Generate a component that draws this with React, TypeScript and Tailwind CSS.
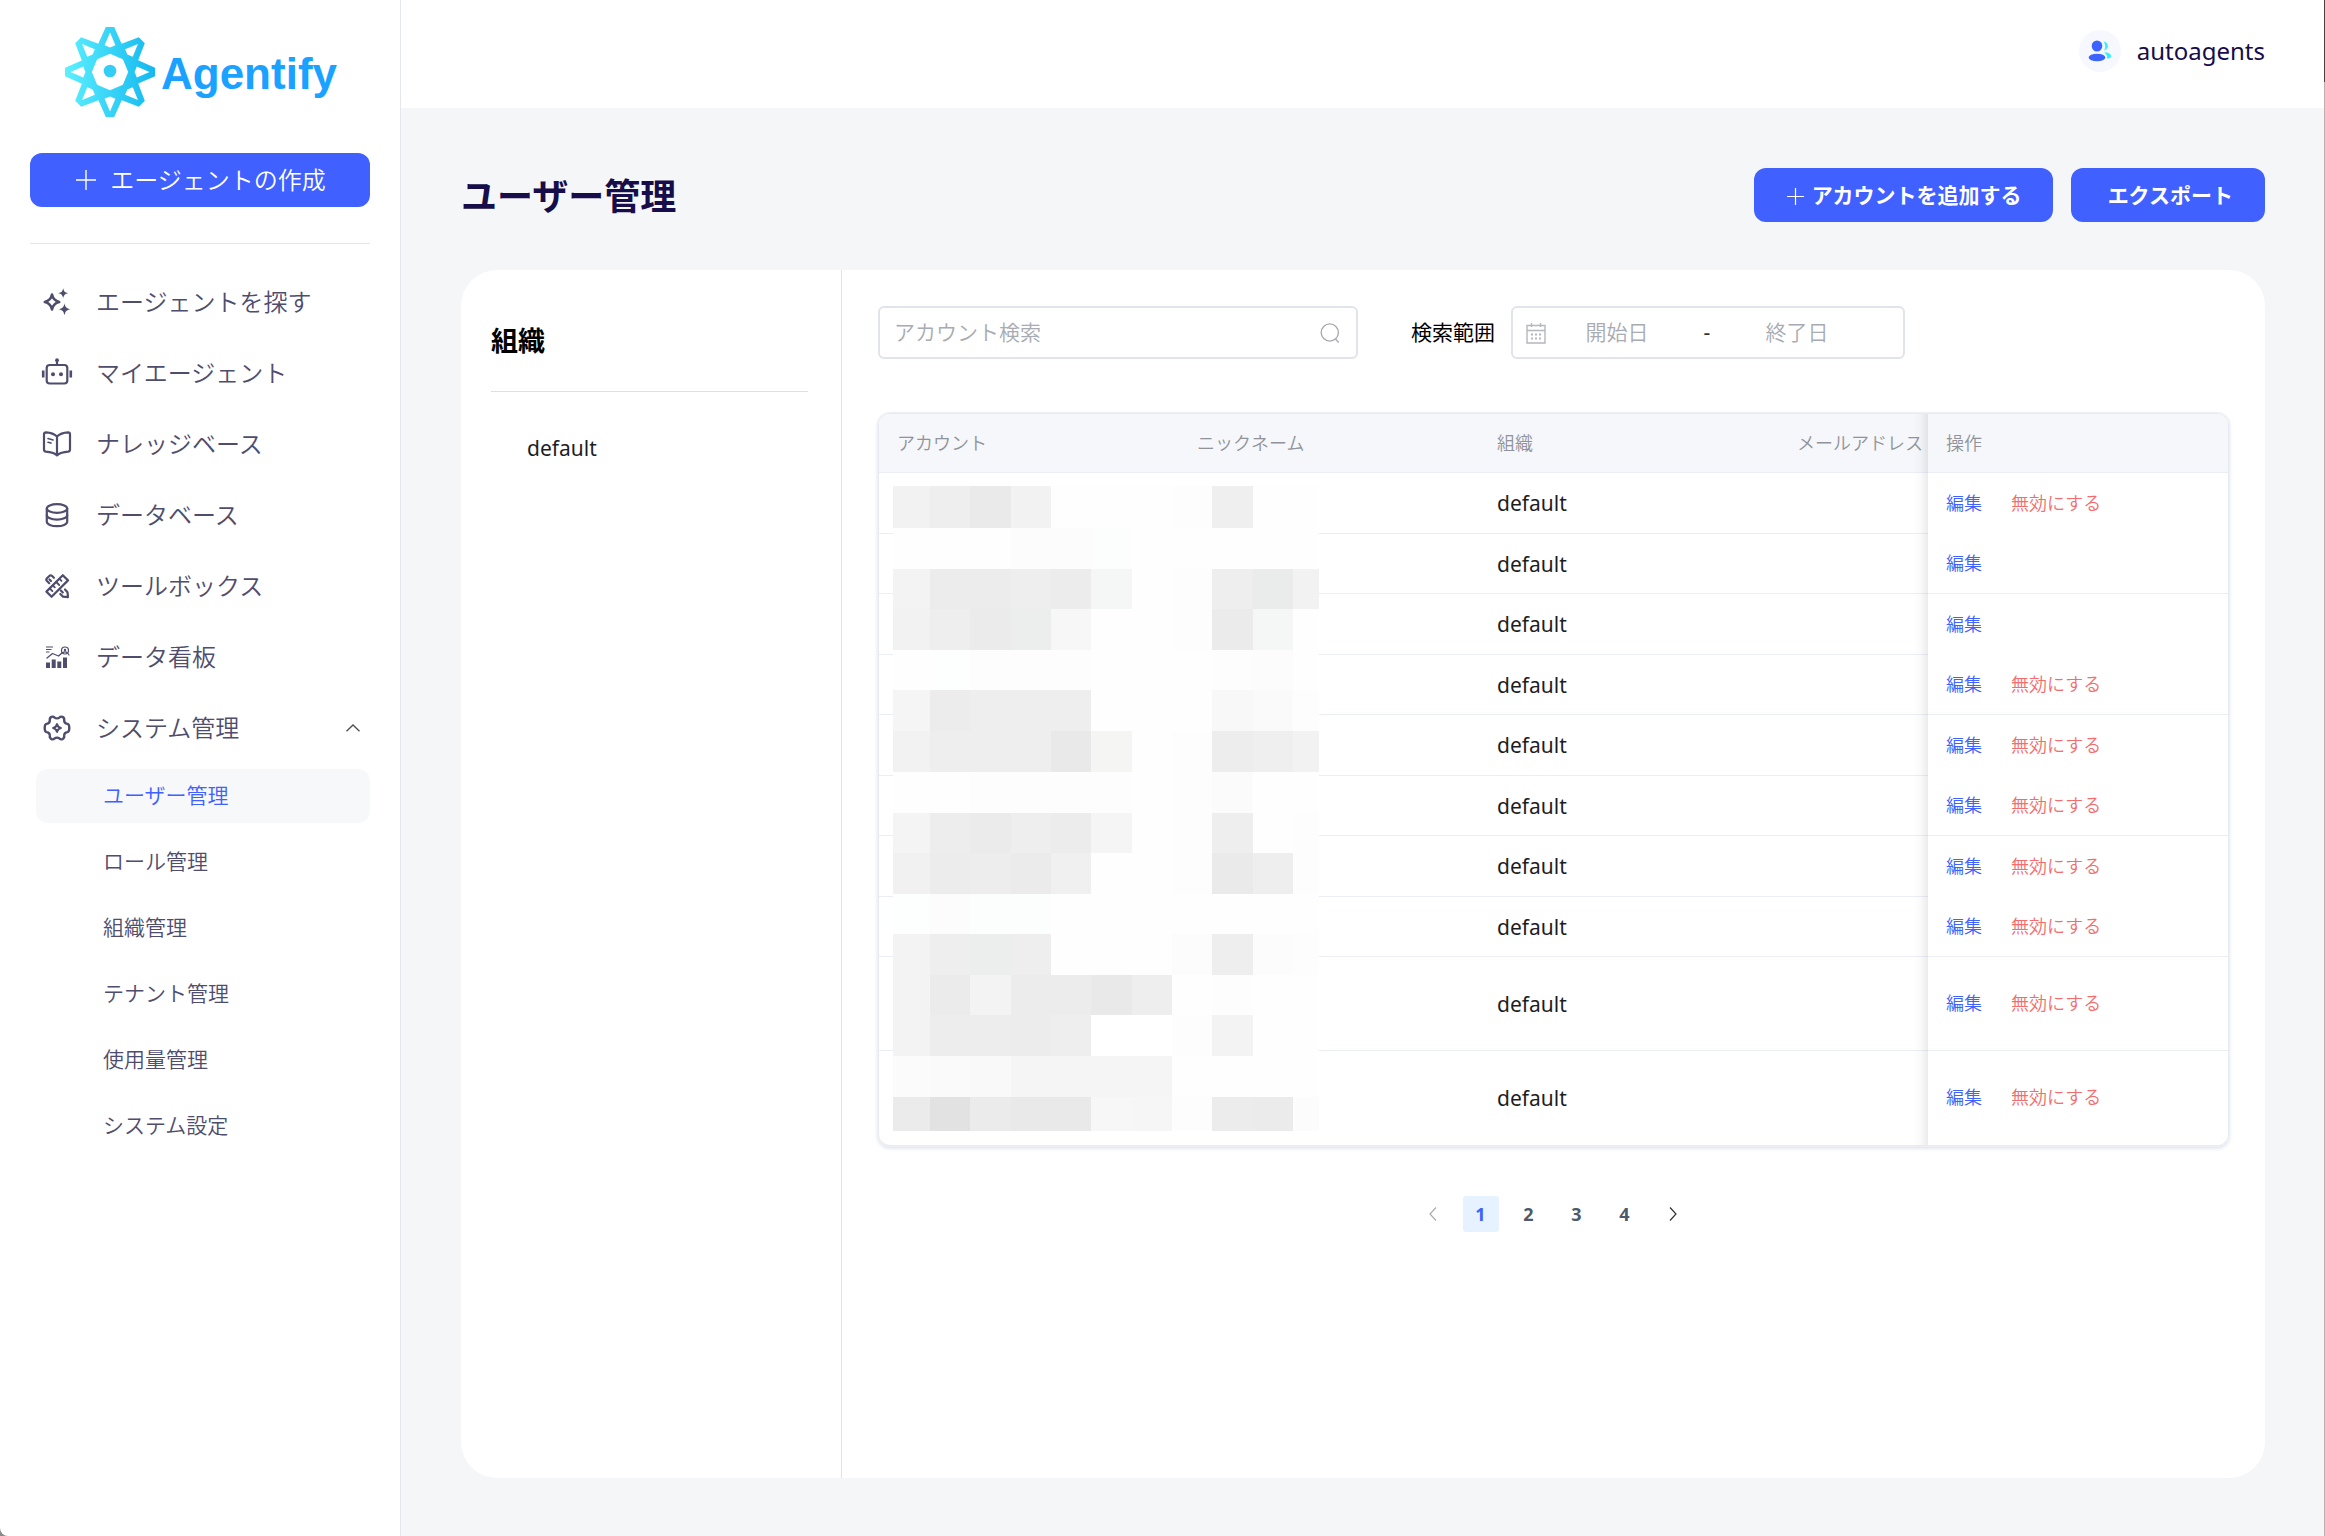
import React from "react";

const navItems = [
  { label: "エージェントを探す", icon: SparkleIcon },
  { label: "マイエージェント", icon: RobotIcon },
  { label: "ナレッジベース", icon: BookIcon },
  { label: "データベース", icon: DatabaseIcon },
  { label: "ツールボックス", icon: ToolsIcon },
  { label: "データ看板", icon: ChartIcon },
];

const subItems = ["ユーザー管理", "ロール管理", "組織管理", "テナント管理", "使用量管理", "システム設定"];

const rows = [
  { org: "default", canDisable: true },
  { org: "default", canDisable: false },
  { org: "default", canDisable: false },
  { org: "default", canDisable: true },
  { org: "default", canDisable: true },
  { org: "default", canDisable: true },
  { org: "default", canDisable: true },
  { org: "default", canDisable: true },
  { org: "default", canDisable: true, tall: true },
  { org: "default", canDisable: true, tall: true },
];

/* Masked account and nickname cells: column edges, row edges and one shade per tile. */
const maskX = [0, 37, 77, 118, 158, 198, 239, 279, 319, 360, 400, 426];
const maskY = [0, 42, 83, 123, 164, 204, 245, 286, 327, 367, 408, 448, 489, 529, 570, 611, 645];
const maskTiles = [
  "f2f2f2 eeeeee eaeaea f2f2f2 fefefe fefefe fefefe fdfdfd efefef fefefe fefefe",
  "fefefe fefefe fefefe fcfcfc fcfcfc fcfefd fefefe fefefe fefefe fefefe fefefe",
  "f3f3f3 ececec ececec eeeeee ececec f5f7f6 fefefe fdfdfd eeeeee eaeceb f2f2f2",
  "f2f2f2 eeeeee ebebeb ebeeed f7f7f7 fefefe fefefe fdfdfd ebebeb f5f7f6 fefefe",
  "fefefe fdfefe fdfdfd fdfdfd fdfdfd fefefe fefefe fefefe fdfdfd fcfcfc fefefe",
  "f5f5f5 ececec eeeeee eeeeee eeeeee fefefe fefefe fefefe f8f8f8 fafafa fdfdfd",
  "f2f2f2 eeeeee eeeeee eeeeee e9e9e9 f5f5f3 fefefe fdfdfd ededed efefef f2f2f2",
  "fefefe fefefe fdfdfd fdfdfd fdfdfd fdfdfd fefefe fdfdfd fbfbfb fefefe fefefe",
  "f4f4f4 ededed ebebeb eeeeee ececec f5f5f5 fefefe fdfdfd eeeeee fefefe fdfdfd",
  "f1f1f1 ececec ededed ebebeb f0f0f0 fefefe fefefe fdfdfd eaeaea eeeeee fdfdfd",
  "fdfefe fcfcfc fcfefd fcfefd fefefe fefefe fefefe fefefe fefefe fefefe fefefe",
  "f3f3f3 eeeeee ebeeed eeeeee fefefe fefefe fefefe fcfcfc eeeeee fcfcfc fdfdfd",
  "f3f3f3 ebebeb f3f3f3 ececec ececec e9e9e9 eeeeee fefefe fdfdfd fefefe fefefe",
  "f3f3f3 ededed ededed ececec eeeeee ffffff ffffff fdfdfd f3f3f3 fefefe fefefe",
  "fbfbfb fafafa f9f9f9 f5f5f5 f5f5f5 f5f5f5 f5f5f5 fefefe fefefe fefefe fefefe",
  "ebebeb e2e2e2 ebebeb e9e9e9 e9e9e9 f7f7f7 f6f6f6 fdfdfd ececec ebebeb fcfcfc",
].map((line) => line.split(" "));

function Mosaic() {
  return (
    <svg className="absolute left-[14px] top-[72px]" width="426" height="645" viewBox="0 0 426 645" shapeRendering="crispEdges" aria-hidden="true">
      {maskTiles.map((line, r) =>
        line.map((shade, c) => (
          <rect
            key={`${r}-${c}`}
            x={maskX[c]}
            y={maskY[r]}
            width={maskX[c + 1] - maskX[c]}
            height={maskY[r + 1] - maskY[r]}
            fill={`#${shade}`}
          />
        )),
      )}
    </svg>
  );
}

function Icon({ children }: { children: React.ReactNode }) {
  return (
    <svg
      width="32"
      height="32"
      viewBox="0 0 32 32"
      fill="none"
      stroke="#4f4d6e"
      strokeWidth="2.2"
      strokeLinecap="round"
      strokeLinejoin="round"
      className="shrink-0"
      aria-hidden="true"
    >
      {children}
    </svg>
  );
}

function SparkleIcon() {
  return (
    <Icon>
      <path d="M11 8.600c.9 4.400 2.900 6.400 7.200 7.400c-4.300 1-6.300 3-7.200 7.400c-.9-4.400-2.900-6.400-7.200-7.400c4.300-1 6.300-3 7.200-7.400z" strokeWidth="2.600" />
      <path d="M22.200 2.300c.7 3.200 1.700 4.200 4.900 4.900c-3.200.7-4.200 1.700-4.900 4.900c-.7-3.200-1.700-4.200-4.900-4.900c3.200-.7 4.200-1.700 4.900-4.900z" fill="#4f4d6e" stroke="none" />
      <path d="M23.500 17.300c.8 4.100 2 5.200 6 6c-4 .8-5.200 2-6 6c-.8-4-2-5.200-6-6c4-.8 5.200-1.900 6-6z" fill="#4f4d6e" stroke="none" />
    </Icon>
  );
}

function RobotIcon() {
  return (
    <Icon>
      <rect x="5.700" y="8" width="20.600" height="18.500" rx="3" />
      <path d="M16 7.500V4" />
      <circle cx="16" cy="3.200" r="1.900" fill="#4f4d6e" stroke="none" />
      <circle cx="12" cy="17.200" r="2" fill="#4f4d6e" stroke="none" />
      <circle cx="20" cy="17.200" r="2" fill="#4f4d6e" stroke="none" />
      <path d="M2.200 13.500v7M29.800 13.500v7" strokeWidth="2.600" strokeLinecap="butt" />
    </Icon>
  );
}

function BookIcon() {
  return (
    <Icon>
      <path d="M16 8.500C13.500 6 9 4.500 5 4.300C3.700 4.300 3 5 3 6.300V21.500c0 1.300.7 2 2 2.200c4 .3 8 1.300 11 3.600c3-2.300 7-3.300 11-3.600c1.300-.2 2-.9 2-2.200V6.300c0-1.300-.7-2-2-2C23 4.500 18.500 6 16 8.500zM16 8.500V27" />
      <path d="M7 10.500l5 1.500M7 14.200l3 .9" strokeWidth="1.600" />
    </Icon>
  );
}

function DatabaseIcon() {
  return (
    <Icon>
      <ellipse cx="16" cy="9.500" rx="10.200" ry="4.400" />
      <path d="M5.800 9.500v13.300c0 2.400 4.600 4.400 10.200 4.400s10.200-2 10.200-4.400V9.500" />
      <path d="M5.800 16.200c0 2.400 4.600 4.400 10.200 4.400s10.200-2 10.200-4.400" />
    </Icon>
  );
}

function ToolsIcon() {
  return (
    <Icon>
      <path d="M21.800 5.200l5.200 5.200L10.600 26.800L5.400 21.600z" />
      <path d="M18.500 8.800l2 2M15.200 12l3 3M11.800 15.400l2 2M8.800 18.500l2.600 2.600" strokeWidth="1.800" />
      <path d="M8.200 13.200L6 11a2 2 0 0 1 0-2.800L8.300 6a2 2 0 0 1 2.800 0l1.800 1.800M8.500 9.500l1.500 1.500" />
      <path d="M24 19.500l2.500 2.700l.5 5l-5-.6l-2.700-2.600M19.800 20.500l2 2" />
    </Icon>
  );
}

function ChartIcon() {
  return (
    <Icon>
      <path d="M5 21.500h4V27H5zM10.700 18.500h4V27h-4zM16.300 20.500h4V27h-4zM22 16.500h4V27h-4z" fill="#4f4d6e" stroke="none" />
      <path d="M6 17l5.500-4.500l6 2.500l4-3.500" strokeWidth="1.300" />
      <path d="M5 6h7M5 8.500h5.500M5 11h3.500" strokeWidth="1" strokeLinecap="butt" />
      <circle cx="24" cy="9.500" r="3.500" strokeWidth="1.200" />
      <circle cx="24" cy="9" r="1.200" fill="#4f4d6e" stroke="none" />
      <path d="M22 11.700c.8-1 3.200-1 4 0M26.500 12l1.500 2" strokeWidth="1.200" />
    </Icon>
  );
}

function GearIcon() {
  return (
    <Icon>
      <path
        d="M10.500 4.900c1.600-.8 2.500 0 3.200.7c1.200 1 3.400 1 4.600 0c.7-.7 1.600-1.500 3.200-.7c1.500.8 1.900 1.700 1.700 3.200c-.1 1.900 1.200 3.600 3.200 3.800c1.200.2 1.900 1.300 1.900 4.100s-.7 3.900-1.900 4.100c-2 .2-3.300 1.900-3.200 3.800c.2 1.500-.2 2.400-1.700 3.200c-1.600.8-2.500 0-3.200-.7c-1.200-1-3.400-1-4.600 0c-.7.7-1.600 1.500-3.200.7c-1.500-.8-1.900-1.700-1.700-3.200c.1-1.900-1.200-3.600-3.200-3.800c-1.200-.2-1.900-1.300-1.900-4.100s.7-3.900 1.900-4.100c2-.2 3.300-1.900 3.200-3.800c-.2-1.500.2-2.400 1.700-3.200z"
        strokeWidth="2.400"
      />
      <path d="M16 12.200c.6 2.200 1.600 3.200 3.800 3.800c-2.200.6-3.200 1.600-3.800 3.800c-.6-2.200-1.600-3.200-3.800-3.800c2.200-.6 3.200-1.600 3.800-3.800z" />
    </Icon>
  );
}

/* A point of the logo, given in the frame of the upright spike and turned by `deg`. */
function turned(x: number, y: number, deg: number) {
  const t = (deg * Math.PI) / 180;
  return `${(45 + x * Math.cos(t) - y * Math.sin(t)).toFixed(2)} ${(45 + x * Math.sin(t) + y * Math.cos(t)).toFixed(2)}`;
}

const spikes = [0, 45, 90, 135, 180, 225, 270, 315];
const logoPath = [
  `M${spikes.map((a) => [turned(-4.2, -45, a), turned(4.2, -45, a), turned(11.6, -28.2, a)].join("L")).join("L")}Z`,
  ...spikes.map((a) => `M${[turned(0, -39.5, a), turned(5.4, -26.8, a), turned(0, -24.6, a), turned(-5.4, -26.8, a)].join("L")}Z`),
  `M${spikes.map((a) => turned(0, -18.2, a)).join("L")}Z`,
].join("");

function LogoMark() {
  return (
    <svg width="90" height="90" viewBox="0 0 90 90" fill="none" aria-hidden="true">
      <defs>
        <linearGradient id="logo" gradientUnits="userSpaceOnUse" x1="0" y1="45" x2="90" y2="45">
          <stop offset="0" stopColor="#5cf0ff" />
          <stop offset="1" stopColor="#14b8ef" />
        </linearGradient>
      </defs>
      <path d={logoPath} fill="url(#logo)" fillRule="evenodd" />
      <circle cx="45" cy="44" r="6.300" fill="#34cdf5" />
    </svg>
  );
}

function Plus({ size }: { size: number }) {
  return (
    <svg width={size} height={size} viewBox="0 0 20 20" stroke="white" strokeWidth="1.400" aria-hidden="true">
      <path d="M10 0v20M0 10h20" />
    </svg>
  );
}

function Sidebar() {
  return (
    <aside className="flex w-[401px] shrink-0 flex-col rounded-bl-lg border-r border-[#e6e7ea] bg-white pl-[30px] pr-[30px]">
      <div className="mt-[27px] flex h-[90px] items-center justify-center gap-[6px] pl-[2px]">
        <LogoMark />
        <span className="mt-1 font-['Liberation_Sans',Arial,sans-serif] text-[44px] leading-[50px] font-bold text-[#1ba1ff]">Agentify</span>
      </div>
      <button className="mt-9 flex h-[54px] w-full items-center justify-center gap-[14px] rounded-xl bg-[#4060ff] pl-[2px] text-[24px] text-white">
        <Plus size={20} />
        エージェントの作成
      </button>
      <hr className="mt-9 border-t border-[#e6e7ea]" />
      <nav className="mt-[22px] text-[#4f4d6e]">
        <ul>
          {navItems.map(({ label, icon: ItemIcon }) => (
            <li key={label}>
              <a href="#" className="flex h-[71px] items-center gap-[23px] pl-[11px] text-[24px]">
                <ItemIcon />
                {label}
              </a>
            </li>
          ))}
          <li>
            <button aria-expanded="true" className="flex h-[71px] w-full items-center gap-[23px] pl-[11px] pr-[10px] text-left text-[24px]">
              <GearIcon />
              <span className="flex-1">システム管理</span>
              <svg width="14" height="8" viewBox="0 0 14 8" fill="none" stroke="#4d4d4d" strokeWidth="1.300" aria-hidden="true">
                <path d="M.5 7.300L7 1l6.500 6.300" />
              </svg>
            </button>
            <ul className="mt-[6px] ml-[6px] flex flex-col gap-3 text-[21px]">
              {subItems.map((label, i) => (
                <li key={label}>
                  <a
                    href="#"
                    className={
                      i === 0
                        ? "flex h-[54px] items-center rounded-xl bg-[#f6f8fa] pl-[67px] text-[#4060ff]"
                        : "flex h-[54px] items-center rounded-xl pl-[67px]"
                    }
                  >
                    {label}
                  </a>
                </li>
              ))}
            </ul>
          </li>
        </ul>
      </nav>
    </aside>
  );
}

function Filters() {
  const box = "flex h-[53px] items-center rounded-md border-2 border-[#e2e4eb] bg-white";
  return (
    <form className="flex items-center text-[21px]" onSubmit={(e) => e.preventDefault()}>
      <div className={`${box} w-[480px] pl-[14px] pr-[16px]`}>
        <input
          type="text"
          aria-label="アカウント検索"
          placeholder="アカウント検索"
          className="min-w-0 flex-1 bg-transparent outline-none placeholder:text-[#a8abb2]"
        />
        <svg width="20" height="22" viewBox="0 0 20 22" fill="none" stroke="#a8abb2" strokeWidth="1.400" aria-hidden="true">
          <circle cx="9.800" cy="10.500" r="8.600" />
          <path d="M15.500 17l3.200 3.500" />
        </svg>
      </div>
      <span id="range-label" className="ml-[53px] font-normal text-black">
        検索範囲
      </span>
      <div role="group" aria-labelledby="range-label" className={`${box} ml-4 w-[394px] pl-[13px] pr-2`}>
        <svg width="20" height="22" viewBox="0 0 20 22" fill="none" stroke="#b4b7be" strokeWidth="1.400" aria-hidden="true">
          <path d="M1 3.500h18v17.500H1zM1 8.500h18M5.500 1v4M14.500 1v4" />
          <path d="M5 12.500h2M9 12.500h2M13 12.500h2M5 16.500h2M9 16.500h2M13 16.500h2" strokeWidth="1.800" />
        </svg>
        <input type="text" aria-label="開始日" placeholder="開始日" className="w-[142px] bg-transparent text-center outline-none placeholder:text-[#a8abb2]" />
        <span className="w-[38px] text-center font-normal text-[#303133]">-</span>
        <input type="text" aria-label="終了日" placeholder="終了日" className="w-[142px] bg-transparent text-center outline-none placeholder:text-[#a8abb2]" />
      </div>
    </form>
  );
}

function AccountTable() {
  const head = "bg-[#f5f7fb] border-b border-[#ebeef7] pl-[18px] text-left font-[350]";
  return (
    <div className="relative mt-[54px] overflow-hidden rounded-xl border border-[#e6eaf1] shadow-[0_0_0_1px_#eef0f5,0_2px_4px_#d5dbe5]">
      <table className="w-full table-fixed border-separate border-spacing-0">
        <colgroup>
          <col className="w-[300px]" />
          <col className="w-[300px]" />
          <col className="w-[300px]" />
          <col />
          <col className="w-[300px]" />
        </colgroup>
        <thead>
          <tr className="h-[59px] text-[18px] leading-6 text-[#909399]">
            <th scope="col" className={head}>アカウント</th>
            <th scope="col" className={head}>ニックネーム</th>
            <th scope="col" className={head}>組織</th>
            <th scope="col" className={`${head} whitespace-nowrap`}>メールアドレス</th>
            <th scope="col" className={head}>操作</th>
          </tr>
        </thead>
        <tbody>
          {rows.map((row, i) => {
            const last = i === rows.length - 1;
            const line = last ? "" : "border-b border-[#ebeef5]";
            const fixedLine = last || (i < 8 && i % 2 === 0) ? "" : "border-b border-[#ebeef5]";
            return (
              <tr key={i} className={row.tall ? "h-[94px]" : "odd:h-[61px] even:h-[60px]"}>
                <td className={line} />
                <td className={line} />
                <td className={`${line} pl-[18px] text-[21px] leading-7 font-normal text-[#1d1d1f]`}>{row.org}</td>
                <td className={line} />
                <td className={`${fixedLine} bg-white pb-[2px] pl-[18px] text-[18px] leading-6`}>
                  <div className="flex gap-[29px]">
                    <button className="text-[#4060ff]">編集</button>
                    {row.canDisable && <button className="text-[#f56c6c]">無効にする</button>}
                  </div>
                </td>
              </tr>
            );
          })}
        </tbody>
      </table>
      <div className="pointer-events-none absolute inset-y-0 right-[300px] w-[15px] bg-linear-to-r from-transparent via-black/2 to-black/8" />
      <Mosaic />
    </div>
  );
}

function Pagination() {
  const item = "flex h-9 w-9 items-center justify-center rounded-[3px] text-[18px] font-bold";
  return (
    <nav aria-label="ページ" className="mt-[50px] flex justify-center gap-3 pr-[2px]">
      <button aria-label="前のページ" className={item} disabled>
        <svg width="8" height="14" viewBox="0 0 8 14" fill="none" stroke="#a8abb2" strokeWidth="1.200">
          <path d="M7 .5L1 7l6 6.500" />
        </svg>
      </button>
      {[1, 2, 3, 4].map((n) => (
        <button key={n} aria-current={n === 1 ? "page" : undefined} className={n === 1 ? `${item} bg-[#e6f2ff] text-[#4060ff]` : `${item} text-[#4e5969]`}>
          {n}
        </button>
      ))}
      <button aria-label="次のページ" className={item}>
        <svg width="8" height="14" viewBox="0 0 8 14" fill="none" stroke="#303133" strokeWidth="1.200">
          <path d="M1 .5L7 7l-6 6.500" />
        </svg>
      </button>
    </nav>
  );
}

export default function App() {
  return (
    <div className="flex min-h-screen bg-[#8a8a8a] font-['Noto_Sans','Noto_Sans_CJK_JP',sans-serif] font-[350]">
      <Sidebar />
      <div className="flex min-w-0 flex-1 flex-col bg-[#f5f6f8]">
        <header className="flex h-[108px] items-center justify-end bg-white pr-[59px] pb-[6px]">
          <a href="#" className="flex items-center gap-4 text-[24px] font-normal text-[#160d4a]">
            <span className="flex h-[42px] w-[42px] items-center justify-center rounded-full bg-[#f6f8fd]">
              <svg width="24" height="22" viewBox="0 0 24 22" aria-hidden="true">
                <path d="M15.500 1.500c5 .5 6.500 7 .5 9c1.700-3 1.800-6-.5-9z" fill="#2ff3fb" />
                <path d="M16 12.500c4.500-.5 7.500 1.500 7 4c-.3 1.600-2 2-4 2c.5-3-.5-4.500-3-6z" fill="#2ff3fb" />
                <ellipse cx="9" cy="6" rx="5.300" ry="5.600" fill="#3c63ff" />
                <ellipse cx="9" cy="17.500" rx="8.300" ry="3.800" fill="#3c63ff" />
              </svg>
            </span>
            autoagents
          </a>
        </header>
        <main className="flex flex-1 flex-col px-[59px] pb-[58px] pl-[60px]">
          <div className="mt-[60px] flex h-[54px] items-center">
            <h1 className="flex-1 pt-1 text-[36px] leading-[54px] font-bold text-[#160d4a]">ユーザー管理</h1>
            <div className="flex gap-[18px] text-[21px] font-bold text-white">
              <button className="flex h-[54px] items-center gap-2 rounded-xl bg-[#4060ff] pt-[2px] pl-[33px] pr-[31px]">
                <Plus size={17} />
                アカウントを追加する
              </button>
              <button className="flex h-[54px] items-center rounded-xl bg-[#4060ff] pt-[2px] pl-[37px] pr-8">エクスポート</button>
            </div>
          </div>
          <div className="mt-12 flex flex-1 rounded-[36px] bg-white">
            <section className="w-[381px] shrink-0 border-r border-[#e1e2e5] pl-[30px] pr-[33px]">
              <h2 className="mt-[51px] text-[27px] leading-10 font-bold text-black">組織</h2>
              <hr className="mt-[30px] border-t border-[#dcdfe6]" />
              <a href="#" className="mt-[38px] ml-9 block text-[21px] leading-[36px] font-normal text-[#1d1d1f]">
                default
              </a>
            </section>
            <section className="min-w-0 flex-1 py-9 pl-9 pr-9">
              <Filters />
              <AccountTable />
              <Pagination />
            </section>
          </div>
        </main>
      </div>
      <div className="flex w-px flex-col bg-[#b3b3b3]">
        <div className="h-[82px] bg-[#444]" />
      </div>
    </div>
  );
}
